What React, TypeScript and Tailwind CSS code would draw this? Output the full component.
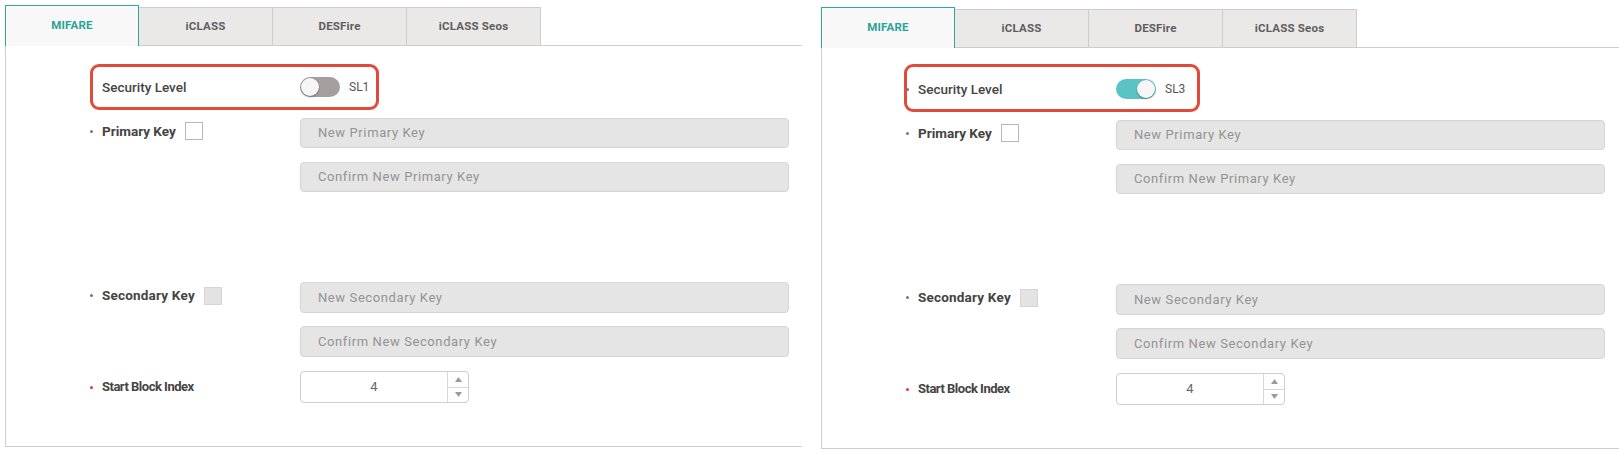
import React from "react";

const tabs = ["MIFARE", "iCLASS", "DESFire", "iCLASS Seos"];

function Bullet({ red = false }: { red?: boolean }) {
  return (
    <span
      className={`w-[3px] h-[3px] rounded-full shrink-0 ${red ? "bg-[#e53935]" : "bg-[#777]"}`}
    />
  );
}

function Toggle({ on }: { on: boolean }) {
  return (
    <div
      className={`relative w-[40px] h-[20px] rounded-full ${on ? "bg-[#5cc3c4]" : "bg-[#a59e9f]"}`}
    >
      <span
        className={`absolute top-[1px] w-[18px] h-[18px] rounded-full bg-[#f6f6f6] shadow-[0_1px_2px_rgba(0,0,0,0.35)] ${
          on ? "left-[21px]" : "left-[1px]"
        }`}
      />
    </div>
  );
}

function TextBox({ placeholder }: { placeholder: string }) {
  return (
    <div className="w-[489px] h-full rounded-[4px] border border-[#d5d5d5] bg-[#e5e5e5] flex items-center pl-[17px] text-[13px] tracking-[0.6px] text-[#939393]">
      {placeholder}
    </div>
  );
}

function NumberBox() {
  return (
    <div className="w-[169px] h-full rounded-[4px] border border-[#cfcfcf] bg-white flex">
      <div className="flex-1 flex items-center justify-center text-[13px] text-[#666]">4</div>
      <div className="w-[21px] flex flex-col border-l border-[#d8d8d8]">
        <div className="flex-1 flex items-center justify-center border-b border-[#d8d8d8]">
          <svg width="7" height="5" viewBox="0 0 7 5">
            <path d="M3.5 0L7 5H0z" fill="#9a9a9a" />
          </svg>
        </div>
        <div className="flex-1 flex items-center justify-center">
          <svg width="7" height="5" viewBox="0 0 7 5">
            <path d="M0 0h7L3.5 5z" fill="#9a9a9a" />
          </svg>
        </div>
      </div>
    </div>
  );
}

function Checkbox({ disabled = false }: { disabled?: boolean }) {
  return (
    <span
      className={`w-[18px] h-[18px] shrink-0 border ${
        disabled ? "bg-[#e3e3e3] border-[#d6d6d6]" : "bg-white border-[#b8b8b8]"
      }`}
    />
  );
}

function Row({
  label,
  children,
  className = "",
}: {
  label?: React.ReactNode;
  children: React.ReactNode;
  className?: string;
}) {
  return (
    <div className={`flex ${className}`}>
      <div className="w-[294px] shrink-0 pl-[84px] flex items-center gap-[9px]">{label}</div>
      {children}
    </div>
  );
}

function Panel({
  on,
  box,
  className,
}: {
  on: boolean;
  box: string;
  className: string;
}) {
  return (
    <div className={className} style={{ fontFamily: "Roboto, 'Liberation Sans', sans-serif" }}>
      {/* tabs */}
      <div className="flex h-[41px]">
        {tabs.map((t, i) =>
          i === 0 ? (
            <div
              key={t}
              className="w-[134px] h-[41px] border border-b-0 border-[#2fa99c] bg-[#f8f8f8] flex items-center justify-center text-[11.5px] font-bold tracking-[0.2px] text-[#27a397]"
            >
              {t}
            </div>
          ) : (
            <div
              key={t}
              className="w-[134px] h-[39px] self-end border border-l-0 border-[#cdcdcd] bg-[#ebe8e8] flex items-center justify-center text-[11.5px] font-bold tracking-[0.2px] text-[#5e5e5e]"
            >
              {t}
            </div>
          )
        )}
        <div className="flex-1 border-b border-[#cdcdcd]" />
      </div>

      {/* body */}
      <div className="relative border-l border-b border-[#cdcdcd] pt-[26px] pb-[43px]">
        <Row className="h-[30px]" label={<><Bullet /><span className="text-[13.5px] font-medium text-[#444]">Security Level</span></>}>
          <div className="flex items-center gap-[9px]">
            <Toggle on={on} />
            <span className="text-[12px] text-[#555]">{on ? "SL3" : "SL1"}</span>
          </div>
        </Row>

        <Row
          className="h-[30px] mt-[16px]"
          label={
            <div className="flex items-center self-start h-[26px] gap-[9px]">
              <Bullet />
              <span className="text-[13.5px] font-bold text-[#444] tracking-[0px]">Primary Key</span>
              <Checkbox />
            </div>
          }
        >
          <TextBox placeholder="New Primary Key" />
        </Row>

        <Row className="h-[30px] mt-[14px]">
          <TextBox placeholder="Confirm New Primary Key" />
        </Row>

        <Row
          className="h-[31px] mt-[90px]"
          label={
            <div className="flex items-center self-start h-[27px] gap-[9px]">
              <Bullet />
              <span className="text-[13.5px] font-bold text-[#444] tracking-[0.2px]">Secondary Key</span>
              <Checkbox disabled />
            </div>
          }
        >
          <TextBox placeholder="New Secondary Key" />
        </Row>

        <Row className="h-[31px] mt-[13px]">
          <TextBox placeholder="Confirm New Secondary Key" />
        </Row>

        <Row
          className="h-[32px] mt-[14px]"
          label={
            <>
              <Bullet red />
              <span className="text-[13px] font-bold text-[#444] tracking-[-0.5px]">Start Block Index</span>
            </>
          }
        >
          <NumberBox />
        </Row>

        {/* annotation box */}
        <div className={`absolute border-[3px] border-[#e24a3b] rounded-[9px] ${box}`} />
      </div>
    </div>
  );
}

export default function App() {
  return (
    <div className="w-[1619px] h-[472px] bg-white flex items-start overflow-hidden">
      <Panel
        on={false}
        className="ml-[5px] mt-[5px] w-[797px] shrink-0"
        box="left-[84px] top-[18px] w-[289px] h-[46px]"
      />
      <Panel
        on={true}
        className="ml-[19px] mt-[7px] flex-1"
        box="left-[82px] top-[16px] w-[296px] h-[48px]"
      />
    </div>
  );
}
